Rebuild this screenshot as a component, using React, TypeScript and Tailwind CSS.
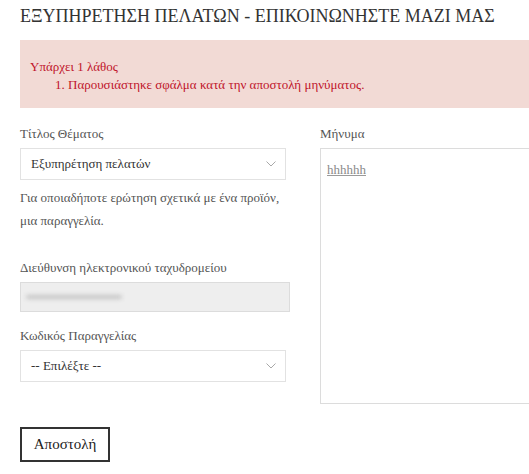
function Chevron() {
  return (
    <svg width="10" height="6" viewBox="0 0 10 6" fill="none" className="shrink-0">
      <path d="M0.5 0.5 L5 5 L9.5 0.5" stroke="#a8a8a8" strokeWidth="1" />
    </svg>
  )
}

function SelectBox({ value }: { value: string }) {
  return (
    <div className="flex h-[32px] w-[266px] items-center justify-between border border-[#e2e2e2] bg-white pl-[10px] pr-[9px] text-[13px] text-[#333]">
      <span>{value}</span>
      <Chevron />
    </div>
  )
}

export default function App() {
  return (
    <main className="h-[474px] w-[529px] overflow-hidden bg-white pl-5 font-['Liberation_Serif']">
      <h1 className="pt-[5px] text-[18px] leading-[22px] text-[#333]">
        ΕΞΥΠΗΡΕΤΗΣΗ ΠΕΛΑΤΩΝ - ΕΠΙΚΟΙΝΩΝΗΣΤΕ ΜΑΖΙ ΜΑΣ
      </h1>

      <div className="mt-[13px] h-[68px] bg-[#f2dad5] pl-[10px] pt-[18px] text-[13px] leading-[18px] text-[#c0142b]">
        <p>Υπάρχει 1 λάθος</p>
        <ol className="pl-[25px]">
          <li>1. Παρουσιάστηκε σφάλμα κατά την αποστολή μηνύματος.</li>
        </ol>
      </div>

      <div className="mt-[14px] flex gap-[30px]">
        <div className="w-[270px] shrink-0">
          <label className="block text-[13px] leading-[24px] text-[#555]">Τίτλος Θέματος</label>
          <div className="mt-[2px]">
            <SelectBox value="Εξυπηρέτηση πελατών" />
          </div>
          <p className="mt-[6px] text-[13px] leading-[23px] text-[#555]">
            Για οποιαδήποτε ερώτηση σχετικά με ένα προϊόν,
            <br />
            μια παραγγελία.
          </p>

          <label className="mt-[24px] block text-[13px] leading-[24px] text-[#555]">
            Διεύθυνση ηλεκτρονικού ταχυδρομείου
          </label>
          <div className="mt-[2px] flex h-[30px] w-[270px] items-center border border-[#dcdcdc] bg-[#eeeeee] pl-[5px]">
            <div className="h-[4px] w-[96px] rounded-full bg-[#c4c4c4] blur-[2px]" />
          </div>

          <label className="mt-[12px] block text-[13px] leading-[24px] text-[#555]">Κωδικός Παραγγελίας</label>
          <div className="mt-[2px]">
            <SelectBox value="-- Επιλέξτε --" />
          </div>

          <button className="mt-[45px] h-[35px] w-[90px] border-2 border-[#333] bg-white text-[15px] text-[#222]">
            Αποστολή
          </button>
        </div>

        <div className="flex-1">
          <label className="block text-[13px] leading-[24px] text-[#555]">Μήνυμα</label>
          <div className="mt-[2px] h-[256px] w-[260px] border border-[#dcdcdc] px-[6px] pt-[8px]">
            <span className="text-[13px] text-[#8a8a8a] underline decoration-[#9a9a9a]">hhhhhh</span>
          </div>
        </div>
      </div>
    </main>
  )
}
